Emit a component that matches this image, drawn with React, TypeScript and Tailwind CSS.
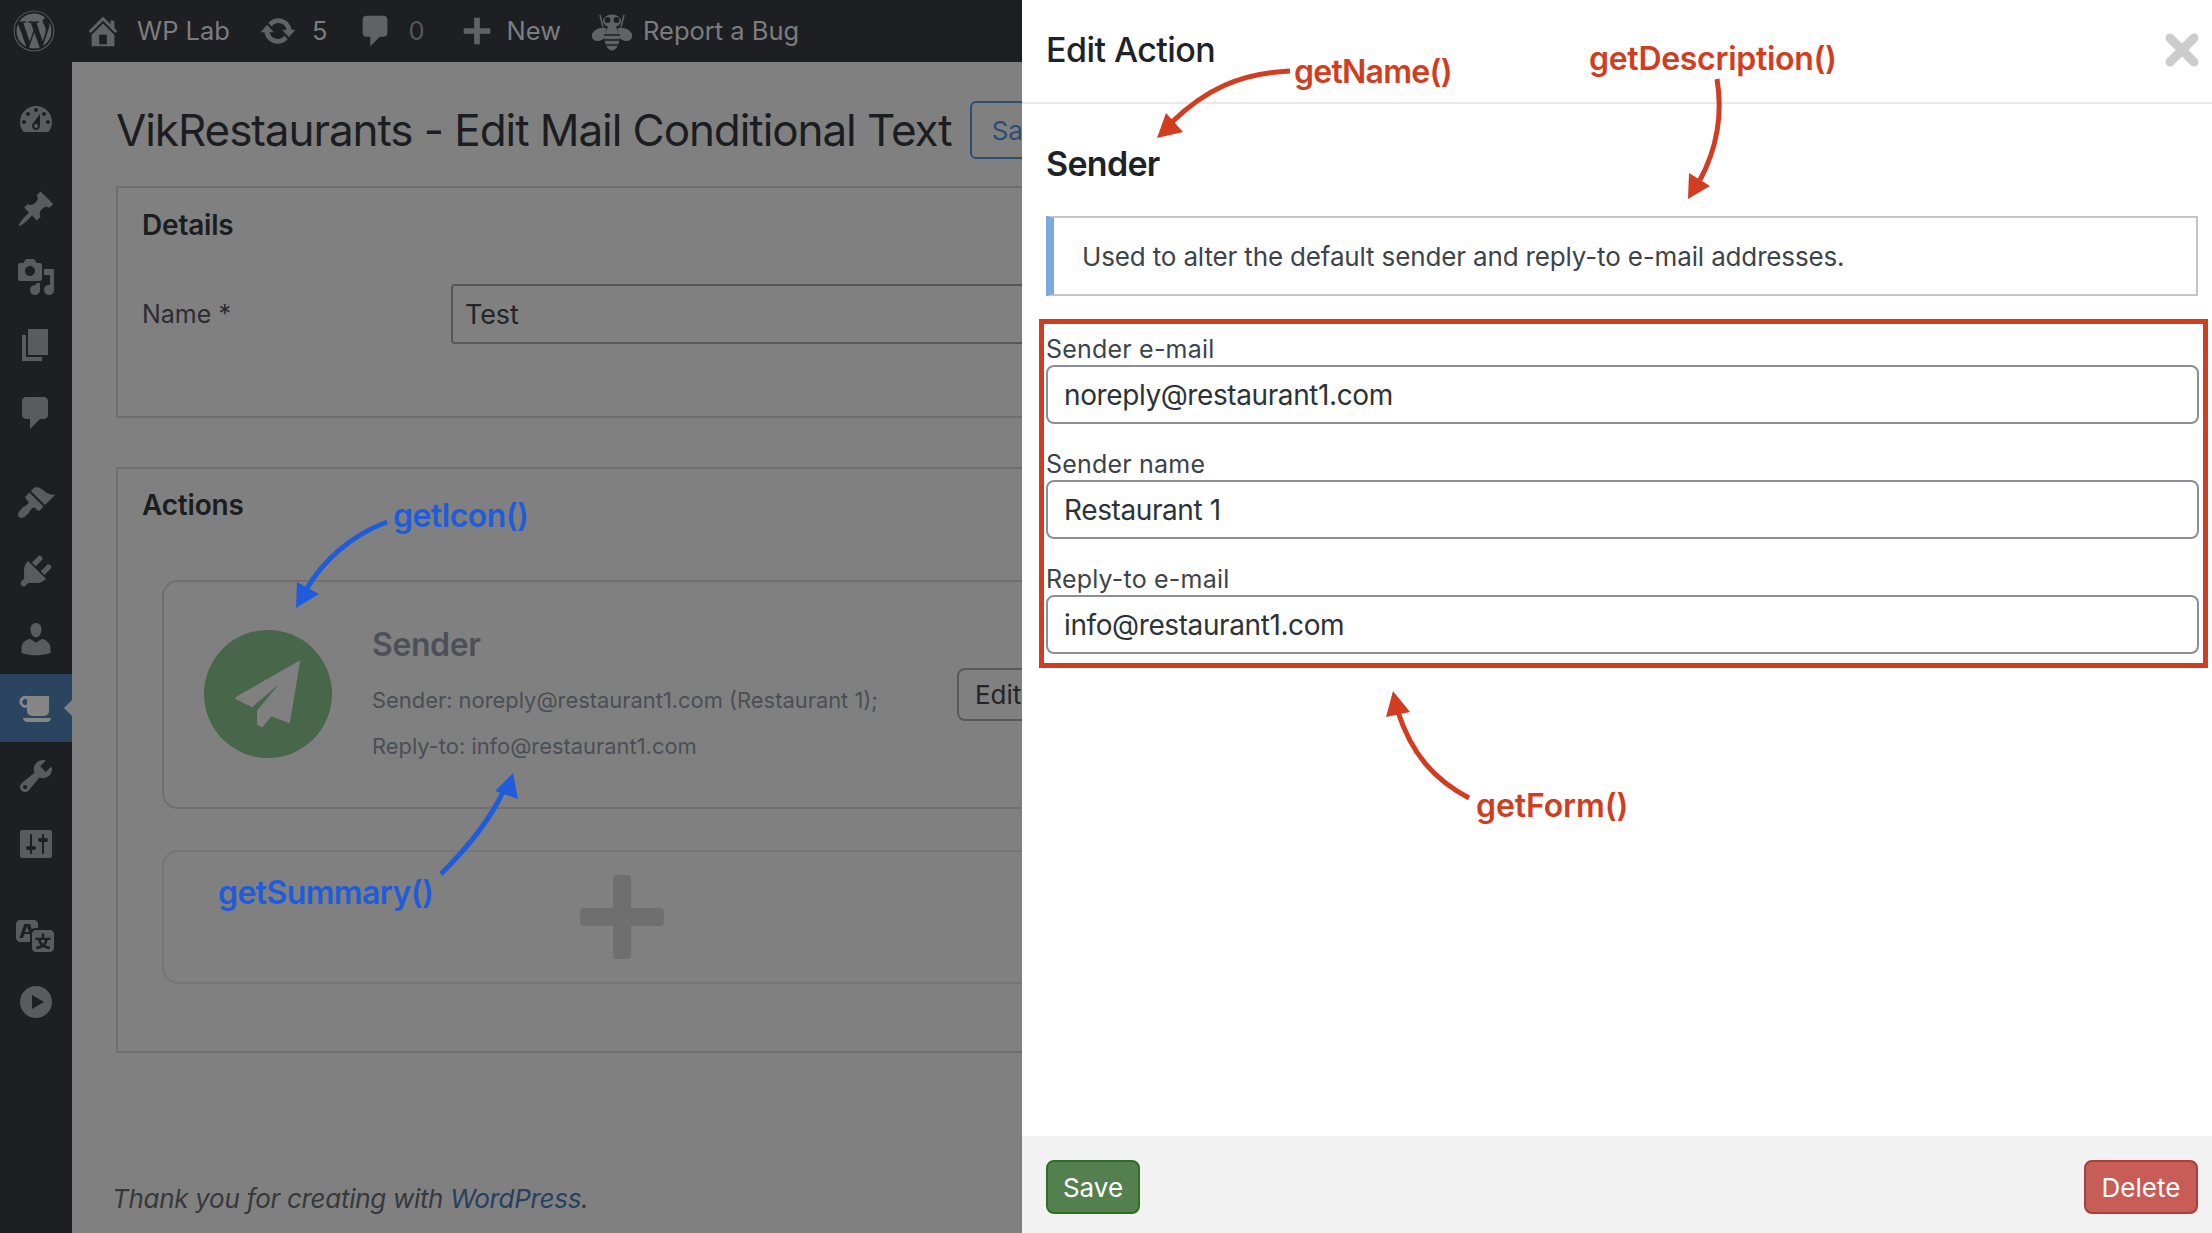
import React from "react";
import { FaWordpress } from "react-icons/fa";

const P: Record<string, string> = {
  dash: "M3.76 16h12.48c1.1-1.37 1.76-3.11 1.76-5 0-4.42-3.58-8-8-8s-8 3.58-8 8c0 1.89.66 3.63 1.76 5zM10 4c.55 0 1 .45 1 1s-.45 1-1 1-1-.45-1-1 .45-1 1-1zM6 6c.55 0 1 .45 1 1s-.45 1-1 1-1-.45-1-1 .45-1 1-1zm8 0c.55 0 1 .45 1 1s-.45 1-1 1-1-.45-1-1 .45-1 1-1zm-5.37 5.55L12 7v6c0 1.1-.9 2-2 2s-2-.9-2-2c0-.57.24-1.08.63-1.45zM4 10c.55 0 1 .45 1 1s-.45 1-1 1-1-.45-1-1 .45-1 1-1zm12 0c.55 0 1 .45 1 1s-.45 1-1 1-1-.45-1-1 .45-1 1-1zm-5 3c0-.55-.45-1-1-1s-1 .45-1 1 .45 1 1 1 1-.45 1-1z",
  pin: "M10.44 3.02l1.82-1.82 6.36 6.35-1.83 1.82c-1.05-.68-2.48-.57-3.41.36l-.75.75c-.92.93-1.04 2.35-.35 3.41l-1.83 1.82-2.41-2.41-2.8 2.79c-.42.42-3.38 2.71-3.8 2.29s1.86-3.39 2.28-3.81l2.79-2.79L4.1 9.36l1.83-1.82c1.05.69 2.48.57 3.4-.36l.75-.75c.93-.92 1.05-2.35.36-3.41z",
  media: "M13 11V4c0-.55-.45-1-1-1h-1.67L9 1H5L3.67 3H2c-.55 0-1 .45-1 1v7c0 .55.45 1 1 1h10c.55 0 1-.45 1-1zM7 4.5c1.38 0 2.5 1.12 2.5 2.5S8.38 9.5 7 9.5 4.5 8.38 4.5 7 5.62 4.5 7 4.5zM14 6h5v10.5c0 1.38-1.12 2.5-2.5 2.5S14 17.88 14 16.5s1.12-2.5 2.5-2.5c.17 0 .34.02.5.05V9h-3V6zm-4 8.05V13h2v3.5c0 1.38-1.12 2.5-2.5 2.5S7 17.88 7 16.5 8.12 14 9.5 14c.17 0 .34.02.5.05z",
  pages: "M6 15V2h10v13H6zm-1 1h8v2H3V5h2v11z",
  comment: "M5 2h9c1.1 0 2 .9 2 2v7c0 1.1-.9 2-2 2h-2l-5 5v-5H5c-1.1 0-2-.9-2-2V4c0-1.1.9-2 2-2z",
  brush: "M14.48 11.06L7.41 3.99l1.5-1.5c.5-.56 2.3-.47 3.51.32 1.21.8 1.43 1.28 2.91 2.1 1.18.64 2.45 1.26 4.45.85zm-.71.71L6.7 4.7 4.93 6.47c-.39.39-.39 1.02 0 1.41l1.06 1.06c.39.39.39 1.03 0 1.42-.6.6-1.43 1.11-2.21 1.69-.35.26-.7.53-1.01.84-1.34 1.34-2.5 2.9-1.26 4.13s2.79.08 4.13-1.26c.31-.31.58-.66.84-1.01.58-.78 1.09-1.61 1.69-2.21.39-.39 1.03-.39 1.42 0l1.06 1.06c.39.39 1.02.39 1.41 0z",
  plug: "M13.11 4.36L9.87 7.6 8 5.73l3.24-3.24c.35-.34 1.05-.2 1.56.32.52.51.66 1.21.31 1.55zm-8 1.77l.91-1.12 9.01 9.01-1.19.84c-.71.71-2.63 1.16-3.82 1.16H6.14L4.9 17.26c-.59.59-1.54.59-2.12 0-.59-.58-.59-1.53 0-2.12l1.24-1.24v-3.88c0-1.13.4-3.19 1.09-3.89zm7.26 3.97l3.24-3.24c.34-.35 1.04-.21 1.55.31.52.51.66 1.21.31 1.55l-3.24 3.25z",
  user: "M10 9.25c-2.27 0-2.73-3.44-2.73-3.44C7 4.02 7.82 2 9.97 2c2.16 0 2.98 2.02 2.71 3.81 0 0-.41 3.44-2.68 3.44zm0 2.57L12.72 10c2.39 0 4.52 2.33 4.52 4.53v2.49s-3.65 1.13-7.24 1.13c-3.65 0-7.24-1.13-7.24-1.13v-2.49c0-2.25 1.94-4.48 4.47-4.48z",
  tool: "M16.68 9.77c-1.34 1.34-3.3 1.67-4.95.99l-5.41 6.52c-.99.99-2.59.99-3.58 0s-.99-2.59 0-3.57l6.52-5.42c-.68-1.65-.35-3.61.99-4.95 1.28-1.28 3.12-1.62 4.72-1.06l-2.89 2.89 2.82 2.82 2.86-2.87c.53 1.58.18 3.39-1.08 4.65zM3.81 16.21c.4.39 1.04.39 1.43 0 .4-.4.4-1.04 0-1.43-.39-.4-1.03-.4-1.43 0-.39.39-.39 1.03 0 1.43z",
  sliders: "M18 16V4c0-.55-.45-1-1-1H3c-.55 0-1 .45-1 1v12c0 .55.45 1 1 1h14c.55 0 1-.45 1-1zM8 11h1c.55 0 1 .45 1 1s-.45 1-1 1H8v1.5c0 .28-.22.5-.5.5s-.5-.22-.5-.5V13H6c-.55 0-1-.45-1-1s.45-1 1-1h1V5.5c0-.28.22-.5.5-.5s.5.22.5.5V11zm5-2h-1c-.55 0-1-.45-1-1s.45-1 1-1h1V5.5c0-.28.22-.5.5-.5s.5.22.5.5V7h1c.55 0 1 .45 1 1s-.45 1-1 1h-1v5.5c0 .28-.22.5-.5.5s-.5-.22-.5-.5V9z",
  translate: "M11 7H9.49c-.63 0-1.25.3-1.59.7L7 5H4.13l-2.39 7h1.69l.74-2H7v4H2c-1.1 0-2-.9-2-2V5c0-1.1.9-2 2-2h7c1.1 0 2 .9 2 2v2zM6.51 9H4.49l1-2.93zM10 8h7c1.1 0 2 .9 2 2v7c0 1.1-.9 2-2 2h-7c-1.1 0-2-.9-2-2v-7c0-1.1.9-2 2-2zm7.25 5v-1.08h-3.17V9.75h-1.16v2.17H9.75V13h1.28c.11.85.56 1.85 1.28 2.62-.87.36-1.89.62-2.31.62-.01.02.22.97.2 1.46.84 0 2.21-.5 3.28-1.15 1.09.65 2.48 1.15 3.34 1.15-.02-.49.2-1.44.2-1.46-.43 0-1.49-.27-2.38-.63.7-.77 1.14-1.77 1.25-2.61h1.36zm-3.81 1.93c-.5-.46-.85-1.13-1.01-1.93h2.09c-.17.8-.51 1.47-1 1.93l-.04.03s-.03-.02-.04-.03z",
  play: "M10 2c4.42 0 8 3.58 8 8s-3.58 8-8 8-8-3.58-8-8 3.58-8 8-8zm-2 11.5l6-3.5-6-3.5v7z",
  home: "M16 8.5l1.53 1.53-1.06 1.06L10 4.62l-6.47 6.47-1.06-1.06L10 2.5l4 4v-2h2v4zm-6-2.46l6 5.99V18H4v-5.97zM12 17v-5H8v5h4z",
  sync: "M10.2 3.28c3.53 0 6.43 2.61 6.92 6h2.08l-3.5 4-3.5-4h2.32c-.45-1.97-2.21-3.45-4.32-3.45-1.45 0-2.73.71-3.54 1.78L4.95 5.66C6.23 4.2 8.11 3.28 10.2 3.28zm-.4 13.44c-3.52 0-6.43-2.61-6.92-6H.8l3.5-4c1.17 1.33 2.33 2.67 3.5 4H5.48c.45 1.97 2.21 3.45 4.32 3.45 1.45 0 2.73-.71 3.54-1.78l1.71 1.95c-1.28 1.46-3.15 2.38-5.25 2.38z",
  plus: "M17 8.5v3h-5.5V17h-3v-5.5H3v-3h5.5V3h3v5.5z",
};

function Dash({ name, className }: { name: string; className?: string }) {
  return (
    <svg viewBox="0 0 20 20" className={className} fill="currentColor">
      <path d={P[name]} />
    </svg>
  );
}

function Row({ name, className = "" }: { name: string; className?: string }) {
  return (
    <div className={`h-[68px] flex items-center justify-center text-[#5a5b5e] ${className}`}>
      <Dash name={name} className="w-10 h-10" />
    </div>
  );
}

function Field({ label, value, className = "" }: { label: string; value: string; className?: string }) {
  return (
    <div className={className}>
      <div className="h-[31px] leading-[30px] text-[25px] text-[#3c434a] tracking-[0.2px]">{label}</div>
      <div className="h-[59px] border-2 border-[#8c8f94] rounded-lg flex items-center pl-[16px] text-[28px] text-[#2c3338] tracking-[-0.4px]">
        {value}
      </div>
    </div>
  );
}

const RED = "#d13d21";
const BLUE = "#1f5cdc";

export default function App() {
  return (
    <div className="relative w-[2212px] h-[1233px] overflow-hidden bg-[#808080] font-['Inter','Liberation_Sans',sans-serif] flex flex-col">
      {/* Admin bar */}
      <div className="h-[62px] shrink-0 bg-[#1e1f22] flex items-center text-[#7c7d80] text-[25.5px]">
        <FaWordpress className="w-[42px] h-[42px] ml-[13px] text-[#616265]" />
        <Dash name="home" className="w-[38px] h-[38px] ml-[29px] text-[#616265]" />
        <span className="ml-[15px] mt-[1px]">WP Lab</span>
        <Dash name="sync" className="w-[38px] h-[38px] ml-[29px] text-[#616265]" />
        <span className="ml-[15px] mt-[1px]">5</span>
        <Dash name="comment" className="w-[38px] h-[38px] ml-[30px] text-[#616265]" />
        <span className="ml-[13px] mt-[1px] text-[#55565a]">0</span>
        <Dash name="plus" className="w-[38px] h-[38px] ml-[33px] text-[#616265]" />
        <span className="ml-[11px] mt-[1px]">New</span>
        <svg viewBox="0 0 50 46" className="w-[50px] h-[46px] ml-[26px] text-[#616265]" fill="currentColor">
          <path d="M13 7 L16 19 M37 7 L34 19" stroke="currentColor" strokeWidth="1.5" fill="none" />
          <ellipse cx="25" cy="13" rx="9" ry="6.5" />
          <circle cx="20.5" cy="12" r="3" fill="#1e1f22" />
          <circle cx="29.5" cy="12" r="3" fill="#1e1f22" />
          <path d="M19 20 C10 19 4 24 5 29 C6 34 13 34 18 30 Z" />
          <path d="M31 20 C40 19 46 24 45 29 C44 34 37 34 32 30 Z" />
          <ellipse cx="25" cy="30" rx="7.5" ry="12.5" />
          <path d="M17 27 H33 M17 32 H33 M19 37 H31" stroke="#1e1f22" strokeWidth="1.6" fill="none" />
        </svg>
        <span className="ml-[6px] mt-[1px]">Report a Bug</span>
      </div>

      <div className="flex-1 flex min-h-0">
        {/* Sidebar */}
        <div className="w-[72px] shrink-0 bg-[#1e1f22] pt-[24px]">
          <Row name="dash" />
          <div className="mt-[21px]">
            <Row name="pin" />
            <Row name="media" />
            <Row name="pages" />
            <Row name="comment" />
          </div>
          <div className="mt-[22px]">
            <Row name="brush" />
            <Row name="plug" />
            <Row name="user" />
          </div>
          <div className="relative mt-[1px] h-[68px] bg-[#2b4560] flex items-center justify-center text-[#868686]">
            <svg viewBox="0 0 40 40" className="w-10 h-10" fill="currentColor">
              <path d="M11 8h22v15a5 5 0 0 1-5 5H16a5 5 0 0 1-5-5v-3.5a6 6 0 1 1 0-11.5zm0 3.5a3 3 0 1 0 0 5z" fillRule="evenodd" />
              <path d="M7 30h28c0 2-2 4-4 4H11c-2 0-4-2-4-4z" />
            </svg>
            <div className="absolute right-0 top-[26px] w-0 h-0 border-y-[8px] border-y-transparent border-r-[8px] border-r-[#808080]" />
          </div>
          <Row name="tool" />
          <Row name="sliders" />
          <div className="mt-[22px]">
            <Row name="translate" />
            <Row name="play" />
          </div>
        </div>

        {/* Main */}
        <div className="flex-1 pl-[44px] flex flex-col min-w-0 relative">
          <div className="flex items-center h-[60px] mt-[38px]">
            <h1 className="text-[44px] leading-[60px] text-[#1c1d20] whitespace-nowrap tracking-[-1.07px]">
              VikRestaurants - Edit Mail Conditional Text
            </h1>
            <div className="ml-[18px] w-[200px] h-[58px] shrink-0 border-2 border-[#2d4d73] rounded-md flex items-center pl-[20px] text-[26px] text-[#2d4d73]">
              Save
            </div>
          </div>

          <div className="mt-[26px] w-[1400px] h-[232px] border-2 border-[#6e6e6e] pl-[24px] pt-[19px]">
            <div className="text-[28px] leading-[36px] font-semibold text-[#1c1d20] tracking-[-0.2px]">Details</div>
            <div className="mt-[41px] flex items-center">
              <div className="w-[309px] text-[25px] text-[#2b2c30] mt-[1px]">Name *</div>
              <div className="w-[900px] h-[60px] border-2 border-[#55575a] rounded-[4px] pl-[12px] flex items-center text-[27px] text-[#232427] tracking-[-0.1px]">
                <span className="mt-[2px]">Test</span>
              </div>
            </div>
          </div>

          <div className="mt-[49px] w-[1400px] h-[586px] border-2 border-[#6e6e6e] pl-[24px] pt-[18px] relative">
            <div className="text-[28px] leading-[36px] font-semibold text-[#1c1d20] tracking-[-0.2px]">Actions</div>
            <div className="mt-[57px] ml-[20px] w-[1300px] h-[229px] border-2 border-[#6f6f6f] rounded-2xl flex pl-[40px]">
              <div className="mt-[48px] w-[128px] h-[128px] rounded-full bg-[#47664a] shrink-0">
                <svg viewBox="0 0 128 128" className="w-[128px] h-[128px]">
                  <path d="M95 32 L32 68 L48 76 L84 45 L54 81 L54 94 L58 96 L67 85 L85 92 Z" fill="#808080" stroke="#808080" strokeWidth="2" strokeLinejoin="round" />
                </svg>
              </div>
              <div className="ml-[40px] flex flex-col">
                <div className="mt-[43px] leading-[40px] text-[32px] font-semibold text-[#4d5058] tracking-[-0.4px]">Sender</div>
                <div className="mt-[12px] leading-[46px] text-[21.9px] text-[#4b4e55] whitespace-nowrap">
                  Sender: noreply@restaurant1.com (Restaurant 1);
                </div>
                <div className="leading-[46px] text-[21.9px] text-[#4b4e55] whitespace-nowrap">
                  Reply-to: info@restaurant1.com
                </div>
              </div>
              <div className="ml-[79px] mt-[86px] w-[120px] h-[53px] border-2 border-[#57595c] rounded-lg flex items-center pl-[16px] text-[26px] text-[#232427]">
                Edit
              </div>
            </div>
            <div className="mt-[41px] ml-[20px] w-[1300px] h-[134px] border-2 border-[#757575] rounded-2xl flex items-center pl-[416px]">
              <svg viewBox="0 0 84 84" className="w-[84px] h-[84px]" fill="#6f6f6f">
                <path d="M33 4a4 4 0 0 1 4-4h10a4 4 0 0 1 4 4v29h29a4 4 0 0 1 4 4v10a4 4 0 0 1-4 4H51v29a4 4 0 0 1-4 4H37a4 4 0 0 1-4-4V51H4a4 4 0 0 1-4-4V37a4 4 0 0 1 4-4h29z" />
              </svg>
            </div>
          </div>

          <div className="mt-[128px] -ml-[4px] text-[26px] italic text-[#37383b] tracking-[-0.3px] leading-[36px]">
            Thank you for creating with <span className="text-[#26405e]">WordPress</span>.
          </div>
        </div>
      </div>

      {/* Slide-in panel */}
      <div className="absolute right-0 top-0 w-[1190px] h-[1233px] bg-white flex flex-col">
        <div className="h-[104px] shrink-0 border-b-2 border-[#e9e9e9] pl-[24px] flex justify-between pr-[13px]">
          <div className="mt-[28px] text-[34px] leading-[44px] font-medium text-[#1d2327] tracking-[-0.55px]">Edit Action</div>
          <svg viewBox="0 0 34 34" className="w-[34px] h-[34px] mt-[33px]" fill="none" stroke="#cccccc" strokeWidth="9" strokeLinecap="round">
            <path d="M5 5 L29 29 M29 5 L5 29" />
          </svg>
        </div>
        <div className="flex-1 pl-[24px] pr-[14px]">
          <div className="mt-[38px] text-[34px] leading-[44px] font-semibold text-[#1d2327] tracking-[-0.7px]">Sender</div>
          <div className="mt-[30px] h-[80px] border-2 border-[#c3c4c9] border-l-[8px] border-l-[#7aa9e0] pl-[28px] flex items-center text-[26px] text-[#3c434a] tracking-[-0.15px]">
            Used to alter the default sender and reply-to e-mail addresses.
          </div>
          <div className="relative mt-[23px] -ml-[7px] -mr-[10px] h-[349px] border-[5px] border-[#d13d21] pl-[2px] pr-[4px] pt-[10px]">
            <Field label="Sender e-mail" value="noreply@restaurant1.com" />
            <Field label="Sender name" value="Restaurant 1" className="mt-[25px]" />
            <Field label="Reply-to e-mail" value="info@restaurant1.com" className="mt-[25px]" />
          </div>
        </div>
        <div className="h-[97px] shrink-0 bg-[#f2f2f2] flex items-start justify-between pt-[24px] pl-[24px] pr-[14px]">
          <div className="w-[94px] h-[54px] rounded-lg bg-[#53804e] border-2 border-[#2f7020] flex items-center justify-center text-[26px] text-white">Save</div>
          <div className="w-[114px] h-[54px] rounded-lg bg-[#c85c56] border-2 border-[#a8403d] flex items-center justify-center text-[26px] text-white">Delete</div>
        </div>
      </div>

      {/* Annotation overlay */}
      <svg className="absolute inset-0 w-[2212px] h-[1233px] pointer-events-none" viewBox="0 0 2212 1233" fill="none">
        <g stroke={RED} strokeWidth="5">
          <path d="M1290 71 C1240 73 1205 90 1172 122" />
          <path d="M1717 79 C1723 115 1716 150 1700 180" />
          <path d="M1469 798 C1435 780 1412 755 1398 712" />
        </g>
        <g fill={RED}>
          <path d="M1157 138 L1166 113 L1183 132 Z" />
          <path d="M1688 199 L1689 173 L1710 186 Z" />
          <path d="M1393 691 L1386 717 L1410 712 Z" />
        </g>
        <g stroke={BLUE} strokeWidth="5">
          <path d="M387 522 C352 535 323 560 306 590" />
          <path d="M441 874 C467 848 489 822 504 790" />
        </g>
        <g fill={BLUE}>
          <path d="M296 608 L297 582 L319 594 Z" />
          <path d="M513 773 L495 791 L518 799 Z" />
        </g>
      </svg>
      <span className="absolute left-[1294px] top-[50px] text-[32px] leading-[44px] font-semibold text-[#d13d21] tracking-[-0.75px]">getName()</span>
      <span className="absolute left-[1589px] top-[37px] text-[32px] leading-[44px] font-semibold text-[#d13d21] tracking-[-0.3px]">getDescription()</span>
      <span className="absolute left-[1476px] top-[784px] text-[32px] leading-[44px] font-semibold text-[#d13d21] tracking-[-0.1px]">getForm()</span>
      <span className="absolute left-[393px] top-[494px] text-[32px] leading-[44px] font-semibold text-[#1f5cdc] tracking-[-0.6px]">getIcon()</span>
      <span className="absolute left-[218px] top-[871px] text-[32px] leading-[44px] font-semibold text-[#1f5cdc] tracking-[-0.6px]">getSummary()</span>
    </div>
  );
}
